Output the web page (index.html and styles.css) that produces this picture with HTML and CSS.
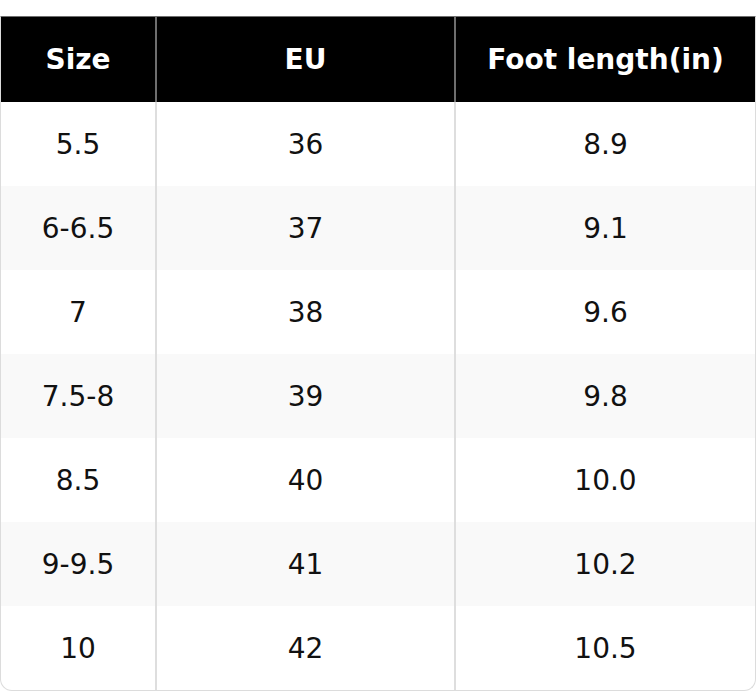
FILE: index.html
```html
<!DOCTYPE html>
<html>
<head>
<meta charset="utf-8">
<link rel="stylesheet" href="styles.css">
</head>
<body>
<div class="wrap">
<table class="size-table">
<thead>
<tr><th class="c1">Size</th><th class="c2">EU</th><th class="c3">Foot length(in)</th></tr>
</thead>
<tbody>
<tr><td>5.5</td><td>36</td><td>8.9</td></tr>
<tr><td>6-6.5</td><td>37</td><td>9.1</td></tr>
<tr><td>7</td><td>38</td><td>9.6</td></tr>
<tr><td>7.5-8</td><td>39</td><td>9.8</td></tr>
<tr><td>8.5</td><td>40</td><td>10.0</td></tr>
<tr><td>9-9.5</td><td>41</td><td>10.2</td></tr>
<tr><td>10</td><td>42</td><td>10.5</td></tr>
</tbody>
</table>
</div>
</body>
</html>
```
FILE: styles.css
```css
html, body {
  margin: 0;
  padding: 0;
  background: #fff;
}
body {
  font-family: "DejaVu Sans", sans-serif;
  padding-top: 16px;
}
.wrap {
  width: 756px;
  box-sizing: border-box;
  border: 1px solid #dcdcdc;
  border-top: 1px solid #6e6e6e;
  border-radius: 0 0 12px 12px;
  overflow: hidden;
}
.size-table {
  width: 100%;
  border-collapse: collapse;
  table-layout: fixed;
}
.c1 { width: 154px; }
.c2 { width: 297px; }
.size-table th {
  background: #000;
  color: #fff;
  font-weight: bold;
  font-size: 28px;
  height: 85px;
  padding: 0;
  text-align: center;
  border-left: 2px solid #6e6e6e;
}
.size-table th:first-child,
.size-table td:first-child {
  border-left: none;
}
.size-table td {
  font-size: 28px;
  color: #111;
  height: 84px;
  padding: 0;
  text-align: center;
  border-left: 2px solid #dedede;
}
.size-table tbody tr:nth-child(even) td {
  background: #f9f9f9;
}
```
